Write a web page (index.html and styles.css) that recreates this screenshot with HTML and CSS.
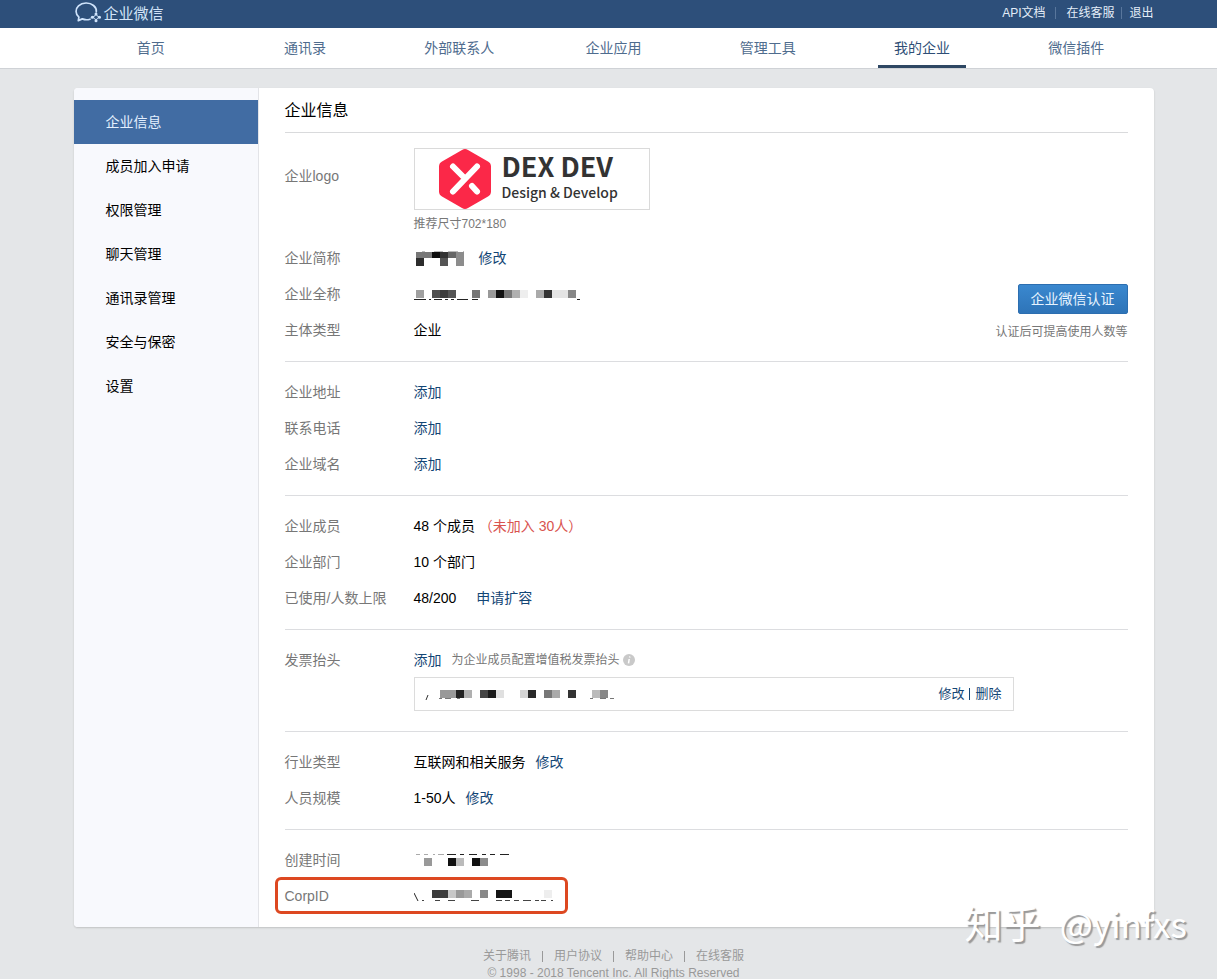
FILE: index.html
```html
<!DOCTYPE html>
<html lang="zh-CN">
<head>
<meta charset="utf-8">
<meta name="viewport" content="width=device-width, initial-scale=1">
<title>企业微信</title>
<link rel="stylesheet" href="styles.css">
</head>
<body>
<header class="topbar">
  <div class="wrap topbar-inner">
    <a class="brand" href="#">
      <svg class="brand-icon" viewBox="0 0 28 24" aria-hidden="true">
        <path d="M16 17.200C13.500 18 10.500 17.800 8.300 16.900L4.300 18.600L4.900 15.200C1.200 12.200 1.200 6.800 4.500 3.800C8.500.2 15.500.1 19.500 3.500C21.500 5.200 22.600 7.500 22.300 9.800" fill="none" stroke="#cfe3fb" stroke-width="1.700" stroke-linejoin="round" stroke-linecap="round"/>
        <path d="M22 11.800Q22.500 14.300 25.500 15.200M25.500 15.200Q22.500 16 22 18.800M22 18.800Q21.500 16 18.300 15.200M18.300 15.200Q21.500 14.500 22 11.800" fill="none" stroke="#cfe3fb" stroke-width="1"/>
        <circle cx="22" cy="12" r="1.500" fill="#cfe3fb"/><circle cx="25.500" cy="15.200" r="1.500" fill="#cfe3fb"/><circle cx="22" cy="18.700" r="1.500" fill="#cfe3fb"/><circle cx="18.300" cy="15.200" r="1.500" fill="#cfe3fb"/>
      </svg>
      <span>企业微信</span>
    </a>
    <div class="toplinks">
      <a href="#">API文档</a><i class="sep sep-wide"></i><a href="#">在线客服</a><i class="sep"></i><a href="#">退出</a>
    </div>
  </div>
</header>
<nav class="mainnav">
  <div class="wrap mainnav-inner">
    <a href="#"><span>首页</span></a>
    <a href="#"><span>通讯录</span></a>
    <a href="#"><span>外部联系人</span></a>
    <a href="#"><span>企业应用</span></a>
    <a href="#"><span>管理工具</span></a>
    <a href="#" class="active"><span>我的企业</span></a>
    <a href="#"><span>微信插件</span></a>
  </div>
</nav>
<main>
  <div class="wrap card">
    <aside class="sidebar">
      <a class="current" href="#">企业信息</a>
      <a href="#">成员加入申请</a>
      <a href="#">权限管理</a>
      <a href="#">聊天管理</a>
      <a href="#">通讯录管理</a>
      <a href="#">安全与保密</a>
      <a href="#">设置</a>
    </aside>
    <div class="content">
      <h1>企业信息</h1>
      <section class="group intro">
        <div class="rows">
          <div class="row logo-row">
            <span class="label">企业logo</span>
            <div class="value">
              <div class="logo-box">
                <svg class="logo-mark" viewBox="0 0 54 60" aria-hidden="true">
                  <path d="M24 1Q27-.8 30 1L50 12.500Q53 14.200 53 17.500V42.500Q53 45.800 50 47.500L30 59Q27 60.800 24 59L4 47.500Q1 45.800 1 42.500V17.500Q1 14.200 4 12.500Z" fill="#fb2848"/>
                  <path d="M15 17.500L25.500 28M39 17.500L15 42.500M34 37L39 42.500" fill="none" stroke="#fff" stroke-width="6" stroke-linecap="round"/>
                </svg>
                <div class="logo-text"><strong>DEX DEV</strong><span>Design &amp; Develop</span></div>
              </div>
              <p class="hint">推荐尺寸702*180</p>
            </div>
          </div>
          <div class="row"><span class="label">企业简称</span><div class="value">
            <svg class="mosaic mosaic-short" viewBox="0 0 50 24" aria-hidden="true">
              <path d="M8 5.500h3M20 5.500h9M34 5.500h10M49 5.500h1" stroke="#bbb"/>
              <path d="M2 6h16v6H2z" fill="#777"/><path d="M18 6h8v6H18z" fill="#0c0c0c"/><path d="M26 6h8v6H26z" fill="#333"/><path d="M34 6h8v6H34z" fill="#666"/><path d="M42 6h8v14H42z" fill="#8c8c8c"/><path d="M2 12h8v8H2z" fill="#2d2d2d"/><path d="M26 12h8v8H26z" fill="#555"/>
            </svg><a href="#">修改</a></div></div>
          <div class="row"><span class="label">企业全称</span><div class="value">
            <svg class="mosaic" viewBox="0 0 200 24" aria-hidden="true">
              <path d="M2 8h8v8H2z" fill="#a0a0a0"/><path d="M18 8h8v8H18z" fill="#505050"/><path d="M26 8h8v8H26z" fill="#3c3c3c"/><path d="M34 8h8v8H34z" fill="#555"/><path d="M58 8h8v8H58z" fill="#777"/><path d="M74 8h8v8H74z" fill="#999"/><path d="M82 8h8v8H82z" fill="#111"/><path d="M90 8h8v8H90z" fill="#777"/><path d="M98 8h8v8H98z" fill="#b0b0b0"/><path d="M106 8h8v8H106z" fill="#eee"/><path d="M122 8h8v8H122z" fill="#aaa"/><path d="M130 8h8v8H130z" fill="#333"/><path d="M138 8h16v8H138z" fill="#e4e4e4"/><path d="M154 8h8v8H154z" fill="#888"/>
              <path d="M0 17.500h12M15 17.500h2M20 17.500h8M31 17.500h3M37 17.500h3M43 17.500h11M58 17.500h6M163 17.500h3" stroke="#222"/>
            </svg></div></div>
          <div class="row"><span class="label">主体类型</span><div class="value">企业</div></div>
        </div>
        <div class="verify">
          <button type="button">企业微信认证</button>
          <p>认证后可提高使用人数等</p>
        </div>
      </section>
      <section class="group">
        <div class="row"><span class="label">企业地址</span><div class="value"><a href="#">添加</a></div></div>
        <div class="row"><span class="label">联系电话</span><div class="value"><a href="#">添加</a></div></div>
        <div class="row"><span class="label">企业域名</span><div class="value"><a href="#">添加</a></div></div>
      </section>
      <section class="group">
        <div class="row"><span class="label">企业成员</span><div class="value">48 个成员 <span class="warn">（未加入 30人）</span></div></div>
        <div class="row"><span class="label">企业部门</span><div class="value">10 个部门</div></div>
        <div class="row"><span class="label">已使用/人数上限</span><div class="value">48/200 <a class="expand" href="#">申请扩容</a></div></div>
      </section>
      <section class="group invoice">
        <div class="row"><span class="label">发票抬头</span><div class="value"><a href="#">添加</a><span class="note">为企业成员配置增值税发票抬头</span><svg class="info" viewBox="0 0 12 12" aria-hidden="true"><circle cx="6" cy="6" r="6" fill="#c9c9c9"/><path d="M6.800 2.500L6.600 3.500M6.200 5L5.500 9.300" stroke="#fff" stroke-width="1.500"/></svg></div></div>
        <div class="invoice-box">
          <svg class="mosaic" viewBox="0 0 200 24" aria-hidden="true">
            <path d="M3 13L1 18" stroke="#333" fill="none"/><path d="M14 16.500h3M20 16.500h6M32 16.500h3M165 16.500h3M175 16.500h6M185 16.500h4" stroke="#777"/>
            <path d="M15 8h16v8H15z" fill="#999"/><path d="M31 8h8v8H31z" fill="#222"/><path d="M39 8h8v8H39z" fill="#b0b0b0"/><path d="M55 8h8v8H55z" fill="#444"/><path d="M63 8h8v8H63z" fill="#1a1a1a"/><path d="M71 8h8v8H71z" fill="#e0e0e0"/><path d="M95 8h8v8H95z" fill="#d5d5d5"/><path d="M103 8h8v8H103z" fill="#292929"/><path d="M119 8h8v8H119z" fill="#777"/><path d="M127 8h8v8H127z" fill="#aaa"/><path d="M143 8h8v8H143z" fill="#333"/><path d="M167 8h8v8H167z" fill="#bbb"/><path d="M175 8h8v8H175z" fill="#888"/>
          </svg>
          <div class="actions"><a href="#">修改</a><i></i><a href="#">删除</a></div>
        </div>
      </section>
      <section class="group">
        <div class="row"><span class="label">行业类型</span><div class="value">互联网和相关服务<a class="edit" href="#">修改</a></div></div>
        <div class="row"><span class="label">人员规模</span><div class="value">1-50人<a class="edit" href="#">修改</a></div></div>
      </section>
      <section class="group">
        <div class="row"><span class="label">创建时间</span><div class="value">
          <svg class="mosaic" viewBox="0 0 200 24" aria-hidden="true">
            <path d="M2 6.500h4M10 6.500h4M19 6.500h2M24 6.500h6" stroke="#aaa"/><path d="M33 6.500h9M46 6.500h4M55 6.500h8M68 6.500h4M76 6.500h5M86 6.500h9" stroke="#222"/>
            <path d="M10 10h8v8H10z" fill="#999"/><path d="M34 10h8v8H34zM58 10h8v8H58z" fill="#111"/><path d="M42 10h8v8H42z" fill="#bbb"/><path d="M66 10h8v8H66z" fill="#8c8c8c"/>
          </svg></div></div>
        <div class="row corp"><span class="label">CorpID</span><div class="value">
          <svg class="mosaic" viewBox="0 0 200 24" aria-hidden="true">
            <path d="M0 9L4 17" stroke="#222" fill="none"/><path d="M8 16.500h2M21 16.500h5M34 16.500h7M57 16.500h8M82 16.500h6M91 16.500h5M100 16.500h5M109 16.500h8M121 16.500h4M127 16.500h5M137 16.500h2" stroke="#444"/>
            <path d="M18 6h16v8H18z" fill="#3c3c3c"/><path d="M34 6h8v8H34z" fill="#c8c8c8"/><path d="M42 6h8v8H42z" fill="#999"/><path d="M50 6h8v8H50z" fill="#aaa"/><path d="M66 6h8v8H66z" fill="#888"/><path d="M82 6h16v8H82z" fill="#151515"/><path d="M130 6h8v8H130z" fill="#eee"/>
          </svg></div></div>
      </section>
    </div>
  </div>
</main>
<footer class="footer">
  <div class="footer-links"><a href="#">关于腾讯</a><i></i><a href="#">用户协议</a><i></i><a href="#">帮助中心</a><i></i><a href="#">在线客服</a></div>
  <p>© 1998 - 2018 Tencent Inc. All Rights Reserved</p>
</footer>
<div class="watermark"><span class="site">知乎</span><span>@yinfxs</span></div>
</body>
</html>
```

FILE: styles.css
```css
*, *::after { box-sizing: border-box; }
body {
  position: relative;
  margin: 0;
  background: #e4e6e8;
  color: #000;
  font: 14px/20px "Liberation Sans", "Noto Sans CJK SC", sans-serif;
}
a { color: #134675; text-decoration: none; }
h1, p { margin: 0; }
.topbar, .mainnav, main, .footer { padding-left: 10px; }
.wrap { max-width: 1080px; margin: 0 auto; }

.topbar { background: #2d4f7a; }
.topbar-inner { display: flex; justify-content: space-between; height: 28px; }
.brand { display: flex; align-items: center; gap: 2px; color: #d3e4f8; font-size: 15px; line-height: 26px; }
.brand-icon { width: 28px; height: 24px; }
.toplinks { display: flex; align-items: center; height: 25px; font-size: 12px; }
.toplinks a { color: #e3edf8; }
.sep { width: 1px; height: 12px; margin: 0 7px; background: #58769c; }
.sep-wide { margin: 0 10px; }

.mainnav { background: #fff; border-bottom: 1px solid #cfd2d6; }
.mainnav-inner { display: flex; }
.mainnav-inner a { flex: 1; display: flex; justify-content: center; color: #4f6c8e; }
.mainnav-inner span { height: 40px; padding: 0 16px; line-height: 40px; }
.mainnav-inner .active span { border-bottom: 3px solid #2e4763; color: #2e4e76; }

main { padding-top: 19px; }
.card {
  display: flex;
  overflow: hidden;
  background: #fff;
  border-radius: 4px;
  box-shadow: 0 1px 2px rgba(0, 0, 0, .16);
}
.sidebar { flex: 0 0 185px; padding-top: 12px; background: #f8f9fd; border-right: 1px solid #e3e4e8; }
.sidebar a { display: block; padding-left: 32px; color: #000; line-height: 44px; }
.sidebar .current { background: #416ca3; color: #e3f0ff; }
.content { flex: 1; min-width: 0; padding: 0 26px; }
h1 { padding-top: 2px; border-bottom: 1px solid #d9dadc; font-size: 16px; font-weight: 400; line-height: 42px; }

.group { padding: 12px 0 13px; border-bottom: 1px solid #dcdde0; }
.group:last-child { border-bottom: 0; }
.row { display: flex; line-height: 36px; }
.label { flex: 0 0 129px; color: #777; }
.value { display: flex; align-items: center; flex: 1; height: 36px; white-space: pre; }
.intro { display: flex; padding-top: 15px; }
.rows { flex: 1; }
.logo-row { height: 92px; }
.logo-row .label { padding-top: 10px; }
.logo-row .value { display: block; height: auto; white-space: normal; }
.logo-box { display: flex; align-items: center; gap: 10px; width: 236px; height: 62px; padding-left: 23px; border: 1px solid #dadada; }
.logo-mark { width: 54px; height: 60px; }
.logo-text { display: flex; flex-direction: column; padding-bottom: 2px; color: #333; font-family: "Noto Sans CJK SC", sans-serif; }
.logo-text strong { font-size: 27px; line-height: 28px; }
.logo-text span { font-size: 14px; font-weight: 500; line-height: 24px; }
.hint { color: #777; font-size: 12px; line-height: 29px; }
.mosaic { width: 200px; height: 24px; }
.mosaic-short { width: 50px; margin-right: 15px; }
.verify { padding-top: 136px; text-align: right; }
.verify button {
  width: 110px;
  height: 30px;
  padding: 0;
  border: 1px solid #2c6eb0;
  border-radius: 2px;
  background: linear-gradient(#3a88cf, #2e74b8);
  color: #e8f4ff;
  font: inherit;
}
.verify p { margin-top: 8px; color: #777; font-size: 12px; }
.warn { color: #d9534f; }
.expand { padding-left: 16px; }
.edit { padding-left: 10px; }

.invoice { padding-bottom: 20px; }
.note { padding-left: 10px; color: #777; font-size: 12px; }
.info { width: 12px; height: 12px; margin-left: 3px; }
.invoice-box {
  display: flex;
  justify-content: space-between;
  align-items: center;
  max-width: 600px;
  height: 34px;
  margin: -1px 0 0 129px;
  padding: 0 11px 0 10px;
  border: 1px solid #dcdcdc;
}
.actions { display: flex; align-items: center; gap: 5px; font-size: 13px; }
.actions i { width: 1px; height: 12px; background: #134675; }
.corp { position: relative; }
.corp::after {
  content: "";
  position: absolute;
  top: -1px;
  bottom: 0;
  left: -10px;
  width: 293px;
  border: 3px solid #dd4821;
  border-radius: 6px;
  pointer-events: none;
}

.footer { padding-top: 20px; color: #999; font-size: 12px; text-align: center; }
.footer-links { display: flex; justify-content: center; align-items: center; gap: 11px; line-height: 19px; }
.footer a { color: #999; }
.footer i { width: 1px; height: 11px; background: #999; }
.footer p { margin-top: 1px; line-height: 12px; }

.watermark {
  position: absolute;
  right: 30px;
  bottom: 32px;
  display: flex;
  align-items: baseline;
  gap: 19px;
  color: #fff;
  font: 35px/48px "Noto Sans CJK SC", sans-serif;
  text-shadow: 2px 2px 1px #999;
}
.site { font-size: 38px; }
```
